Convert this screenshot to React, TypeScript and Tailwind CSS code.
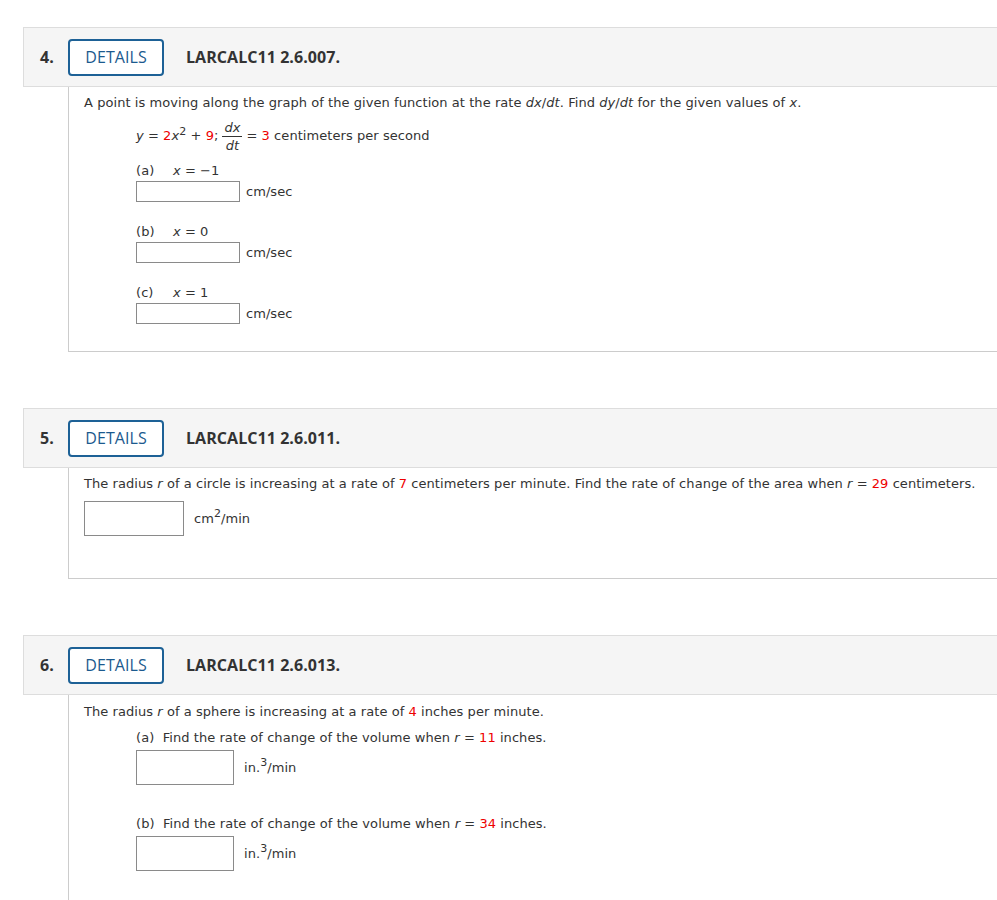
import React from "react";

const BODY = "font-['DejaVu_Sans',Verdana,sans-serif]";
const HEAD = "font-['Open_Sans',sans-serif]";

function Red({ children }: { children: React.ReactNode }) {
  return <span className="text-[#ee0000]">{children}</span>;
}

function V({ children }: { children: React.ReactNode }) {
  return <i className="italic">{children}</i>;
}

function QuestionHeader({ num, code }: { num: number; code: string }) {
  return (
    <div className="flex h-[60px] items-center border border-r-0 border-[#dddddd] bg-[#f5f5f5]">
      <span className={`${HEAD} ml-[16px] w-[28px] text-[16px] font-bold text-[#333]`}>{num}.</span>
      <button
        type="button"
        className={`${HEAD} h-[37px] w-[96px] rounded-[4px] border-2 border-[#1d6196] bg-white text-[16px] font-medium text-[#1b5a8e]`}
      >
        DETAILS
      </button>
      <span className={`${HEAD} ml-[22px] text-[16px] font-bold text-[#333]`}>{code}</span>
    </div>
  );
}

function AnswerBox({ w, h }: { w: string; h: string }) {
  return <span className={`inline-block shrink-0 border border-[#8a8a8a] bg-white ${w} ${h}`} />;
}

function Fraction() {
  return (
    <span className="mx-[4px] inline-flex flex-col items-center align-middle leading-[15px]">
      <V>dx</V>
      <span className="my-[1px] h-px w-[20px] bg-[#333]" />
      <V>dt</V>
    </span>
  );
}

function Part({ label, eq }: { label: string; eq: React.ReactNode }) {
  return (
    <div className="flex flex-col">
      <div className="flex h-[18px] items-center">
        <span className="w-[37px]">({label})</span>
        <span>{eq}</span>
      </div>
      <div className="mt-[1px] flex items-center">
        <AnswerBox w="w-[104px]" h="h-[21px]" />
        <span className="ml-[6px]">cm/sec</span>
      </div>
    </div>
  );
}

export default function App() {
  return (
    <div
      className={`${BODY} min-h-[900px] overflow-hidden bg-white pl-[23px] pt-[27px] text-[13px] leading-[18px] tracking-[0.06px] text-[#333]`}
    >
      {/* question 4 */}
      <section>
        <QuestionHeader num={4} code="LARCALC11 2.6.007." />
        <div className="ml-[45px] flex flex-col border-b border-l border-[#cccccc] pb-[27px] pl-[15px] pt-[7px]">
          <p>
            A point is moving along the graph of the given function at the rate <V>dx</V>/<V>dt</V>. Find{" "}
            <V>dy</V>/<V>dt</V> for the given values of <V>x</V>.
          </p>
          <div className="ml-[52px] mt-[8px] flex h-[32px] items-center">
            <span>
              <V>y</V> = <Red>2</Red>
              <V>x</V>
              <sup className="text-[11px]">2</sup> + <Red>9</Red>;
            </span>
            <Fraction />
            <span>
              = <Red>3</Red> centimeters per second
            </span>
          </div>
          <div className="ml-[52px] mt-[10px] flex flex-col gap-[21px]">
            <Part label="a" eq={<><V>x</V> = −1</>} />
            <Part label="b" eq={<><V>x</V> = 0</>} />
            <Part label="c" eq={<><V>x</V> = 1</>} />
          </div>
        </div>
      </section>

      {/* question 5 */}
      <section className="mt-[56px]">
        <QuestionHeader num={5} code="LARCALC11 2.6.011." />
        <div className="ml-[45px] flex flex-col border-b border-l border-[#cccccc] pb-[42px] pl-[15px] pt-[7px]">
          <p>
            The radius <V>r</V> of a circle is increasing at a rate of <Red>7</Red> centimeters per minute. Find the
            rate of change of the area when <V>r</V> = <Red>29</Red> centimeters.
          </p>
          <div className="mt-[8px] flex items-center">
            <AnswerBox w="w-[100px]" h="h-[35px]" />
            <span className="ml-[10px]">
              cm<sup className="text-[11px]">2</sup>/min
            </span>
          </div>
        </div>
      </section>

      {/* question 6 */}
      <section className="mt-[56px]">
        <QuestionHeader num={6} code="LARCALC11 2.6.013." />
        <div className="ml-[45px] flex flex-col border-l border-[#cccccc] pb-[40px] pl-[15px] pt-[8px]">
          <p>
            The radius <V>r</V> of a sphere is increasing at a rate of <Red>4</Red> inches per minute.
          </p>
          <div className="ml-[52px] mt-[8px] flex flex-col">
            <p>
              (a)&nbsp; Find the rate of change of the volume when <V>r</V> = <Red>11</Red> inches.
            </p>
            <div className="mt-[3px] flex items-center">
              <AnswerBox w="w-[98px]" h="h-[35px]" />
              <span className="ml-[10px]">
                in.<sup className="text-[11px]">3</sup>/min
              </span>
            </div>
            <p className="mt-[30px]">
              (b)&nbsp; Find the rate of change of the volume when <V>r</V> = <Red>34</Red> inches.
            </p>
            <div className="mt-[3px] flex items-center">
              <AnswerBox w="w-[98px]" h="h-[35px]" />
              <span className="ml-[10px]">
                in.<sup className="text-[11px]">3</sup>/min
              </span>
            </div>
          </div>
        </div>
      </section>
    </div>
  );
}
